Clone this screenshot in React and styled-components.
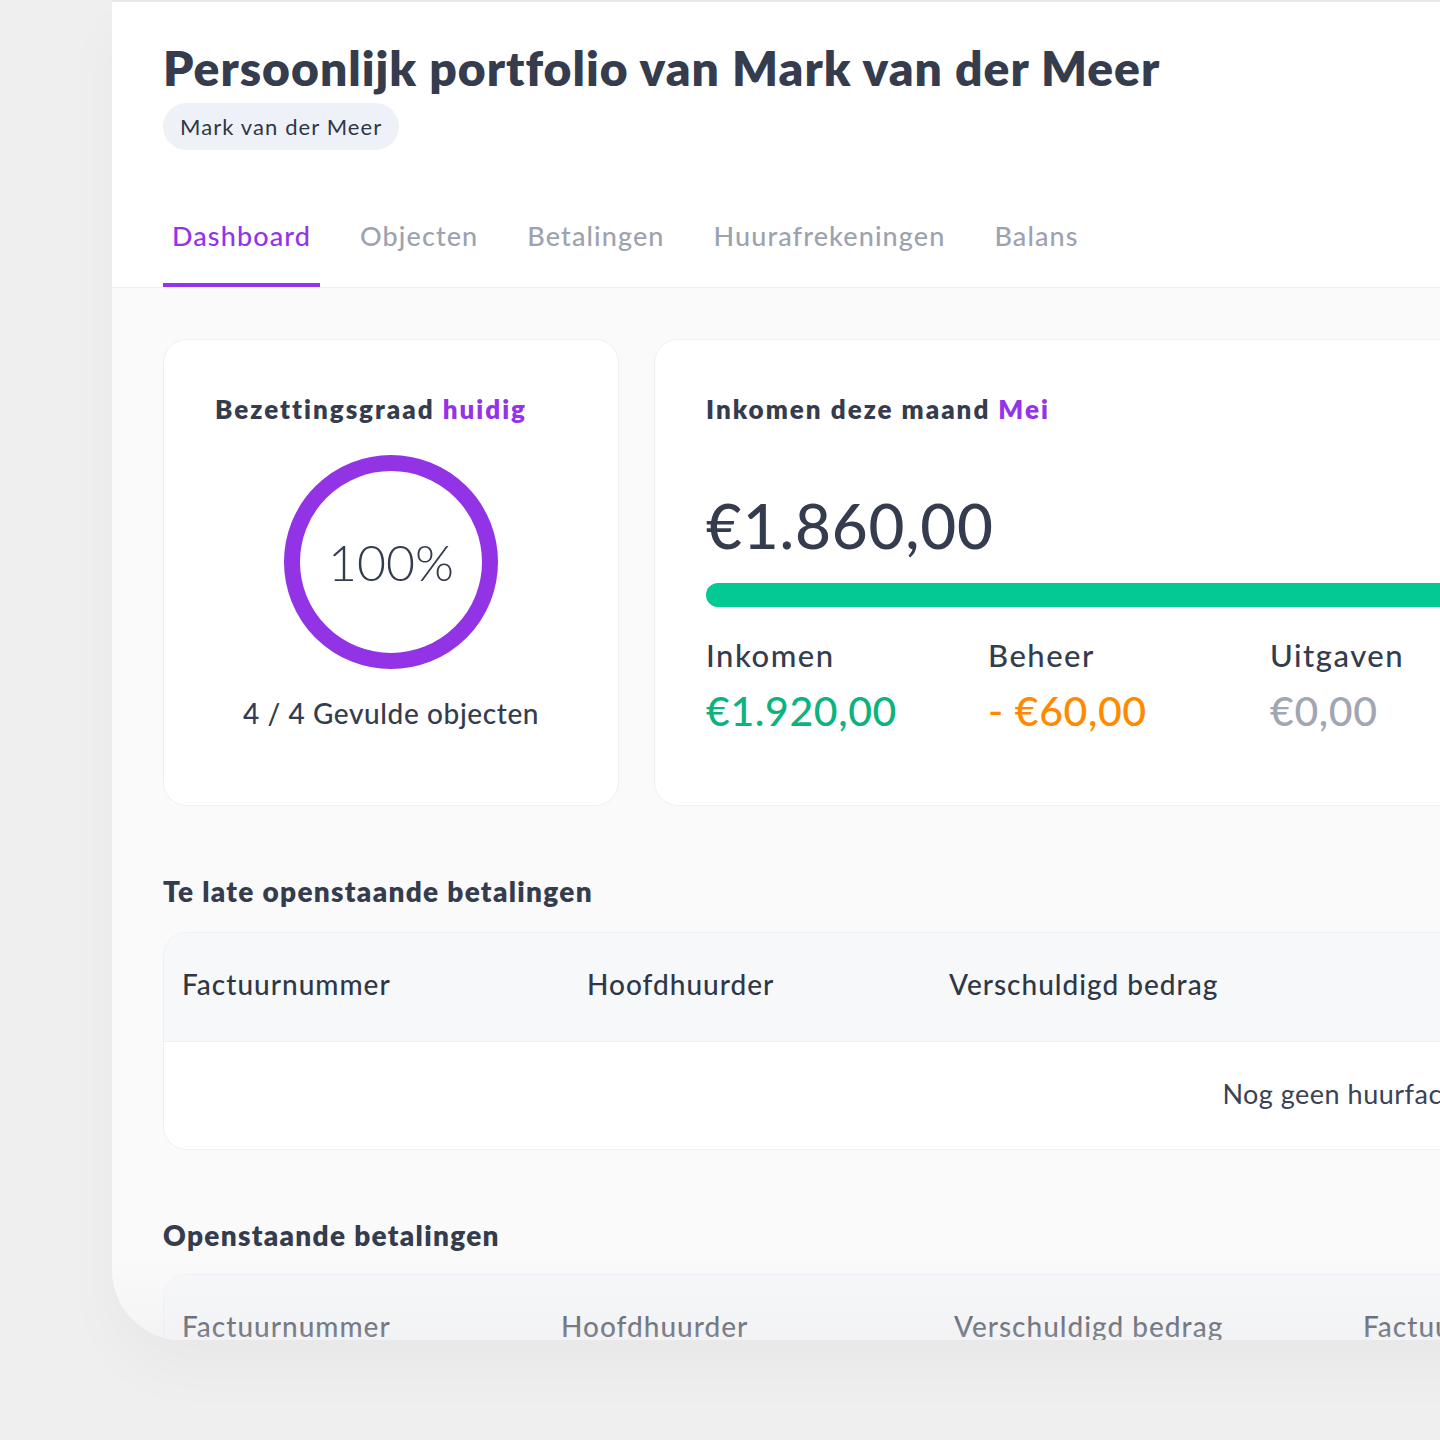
import React from 'react';
import styled, { createGlobalStyle } from 'styled-components';

const GlobalStyle = createGlobalStyle`
  html, body {
    margin: 0;
    padding: 0;
    background: #efefef;
    overflow: hidden;
  }
  * { box-sizing: border-box; }
`;

const Page = styled.div`
  height: 1440px;
  padding-left: 112px;
  font-family: 'Lato', 'Open Sans', sans-serif;
  color: #353d4f;
`;

const Panel = styled.div`
  position: relative;
  width: 2506px;
  height: 1340px;
  background: #fafafb;
  border-top: 2px solid #e6e8ec;
  border-radius: 0 0 0 70px;
  overflow: hidden;
  box-shadow: 0 30px 60px rgba(0, 0, 0, 0.03);
`;

const Fade = styled.div`
  position: absolute;
  left: 0;
  right: 0;
  bottom: 0;
  height: 80px;
  background: linear-gradient(to bottom, rgba(236, 236, 238, 0) 0%, rgba(236, 236, 238, 0.45) 100%);
  pointer-events: none;
`;

const Header = styled.header`
  background: #fff;
  padding: 36px 51px 0;
  border-bottom: 1px solid #eceef2;
`;

const Title = styled.h1`
  margin: 0;
  font-size: 48px;
  line-height: 60px;
  font-weight: 800;
  letter-spacing: 1px;
  color: #343c4e;
`;

const Chip = styled.span`
  display: inline-flex;
  align-items: center;
  height: 47px;
  margin-top: 5px;
  padding: 0 17px;
  border-radius: 24px;
  background: #eef1f7;
  font-size: 22px;
  letter-spacing: 1.1px;
  color: #2f3747;
`;

const Tabs = styled.nav`
  display: flex;
  gap: 31px;
  margin-top: 47px;
`;

const Tab = styled.div`
  padding: 22px 9px 30px;
  font-size: 27px;
  line-height: 34px;
  font-weight: 500;
  letter-spacing: 1.1px;
  color: ${p => (p.$active ? '#9333ea' : '#9ca3af')};
  border-bottom: 4px solid ${p => (p.$active ? '#9333ea' : 'transparent')};
`;

const Content = styled.main`
  padding: 51px 51px 0;
`;

const CardsRow = styled.div`
  display: grid;
  grid-template-columns: 456px 1107px;
  gap: 35px;
`;

const Card = styled.section`
  height: 467px;
  background: #fff;
  border: 1px solid #edf0f5;
  border-radius: 24px;
  padding: 52px 51px;
  display: flex;
  flex-direction: column;
  align-items: ${p => (p.$center ? 'center' : 'stretch')};
`;

const CardTitle = styled.h2`
  align-self: flex-start;
  margin: 0;
  font-size: 26px;
  line-height: 34px;
  font-weight: 800;
  letter-spacing: 2px;
  color: #343c4e;
`;

const Accent = styled.span`
  color: #9333ea;
`;

const Ring = styled.div`
  position: relative;
  width: 214px;
  height: 214px;
  margin-top: 29px;
  display: flex;
  align-items: center;
  justify-content: center;
`;

const RingSvg = styled.svg`
  position: absolute;
  inset: 0;
`;

const RingLabel = styled.span`
  font-size: 50px;
  font-weight: 300;
  color: #343c4e;
`;

const Filled = styled.p`
  margin: 27px 0 0;
  font-size: 28px;
  line-height: 34px;
  font-weight: 500;
  letter-spacing: 0.6px;
  color: #343c4e;
`;

const Total = styled.div`
  margin-top: 65px;
  font-size: 62px;
  line-height: 68px;
  font-weight: 500;
  letter-spacing: 0.8px;
  color: #343c4e;
`;

const Bar = styled.div`
  margin-top: 24px;
  height: 24px;
  border-radius: 12px;
  background: #03c995;
`;

const Stats = styled.div`
  display: grid;
  grid-template-columns: repeat(3, 282px);
  margin-top: 28px;
`;

const StatLabel = styled.div`
  font-size: 31px;
  line-height: 40px;
  font-weight: 500;
  letter-spacing: 1.5px;
  color: #343c4e;
`;

const StatValue = styled.div`
  margin-top: 14px;
  font-size: 41px;
  line-height: 44px;
  font-weight: 500;
  letter-spacing: 0.6px;
  color: ${p => p.$color};
`;

const SectionTitle = styled.h3`
  margin: ${p => p.$top}px 0 ${p => p.$bottom}px;
  font-size: 28px;
  line-height: 36px;
  font-weight: 800;
  letter-spacing: 1.3px;
  color: #343c4e;
`;

const TableCard = styled.div`
  background: #fff;
  border: 1px solid #edf0f5;
  border-radius: 24px;
  overflow: hidden;
`;

const Table = styled.table`
  width: 100%;
  border-collapse: collapse;
  table-layout: fixed;
`;

const Th = styled.th`
  height: 108px;
  padding: 0 18px 5px;
  background: #f7f8fa;
  text-align: left;
  font-size: 28px;
  font-weight: 500;
  letter-spacing: 1px;
  color: #2f3747;
  border-bottom: 1px solid #eef0f4;
  white-space: nowrap;
`;

const EmptyCell = styled.td`
  height: 108px;
  padding-bottom: 4px;
  text-align: center;
  font-size: 27px;
  font-weight: 400;
  letter-spacing: 0.5px;
  color: #3a4254;
`;

const Donut = () => (
  <RingSvg width="214" height="214" viewBox="0 0 214 214">
    <circle cx="107" cy="107" r="99" fill="none" stroke="#9333e6" strokeWidth="16" />
  </RingSvg>
);

const tabs = ['Dashboard', 'Objecten', 'Betalingen', 'Huurafrekeningen', 'Balans'];

const lateCols = [405, 362, 540, 420, 420];
const openCols = [379, 393, 409, 420, 420];

const PaymentsTable = ({ widths, headers, empty }) => (
  <TableCard>
    <Table>
      <colgroup>
        {widths.map((w, i) => (
          <col key={i} style={{ width: w }} />
        ))}
        <col />
      </colgroup>
      <thead>
        <tr>
          {headers.map(h => (
            <Th key={h}>{h}</Th>
          ))}
        </tr>
      </thead>
      {empty && (
        <tbody>
          <tr>
            <EmptyCell colSpan={headers.length}>{empty}</EmptyCell>
          </tr>
        </tbody>
      )}
    </Table>
  </TableCard>
);

export default function App() {
  return (
    <Page>
      <GlobalStyle />
      <Panel>
        <Header>
          <Title>Persoonlijk portfolio van Mark van der Meer</Title>
          <Chip>Mark van der Meer</Chip>
          <Tabs>
            {tabs.map((t, i) => (
              <Tab key={t} $active={i === 0}>{t}</Tab>
            ))}
          </Tabs>
        </Header>
        <Content>
          <CardsRow>
            <Card $center>
              <CardTitle>
                Bezettingsgraad <Accent>huidig</Accent>
              </CardTitle>
              <Ring>
                <Donut />
                <RingLabel>100%</RingLabel>
              </Ring>
              <Filled>4 / 4 Gevulde objecten</Filled>
            </Card>
            <Card>
              <CardTitle>
                Inkomen deze maand <Accent>Mei</Accent>
              </CardTitle>
              <Total>€1.860,00</Total>
              <Bar />
              <Stats>
                <div>
                  <StatLabel>Inkomen</StatLabel>
                  <StatValue $color="#0db37e">€1.920,00</StatValue>
                </div>
                <div>
                  <StatLabel>Beheer</StatLabel>
                  <StatValue $color="#ff8a00">- €60,00</StatValue>
                </div>
                <div>
                  <StatLabel>Uitgaven</StatLabel>
                  <StatValue $color="#a1a6b3">€0,00</StatValue>
                </div>
              </Stats>
            </Card>
          </CardsRow>

          <SectionTitle $top={67} $bottom={23}>Te late openstaande betalingen</SectionTitle>
          <PaymentsTable
            widths={lateCols}
            headers={['Factuurnummer', 'Hoofdhuurder', 'Verschuldigd bedrag', 'Factuurdatum', 'Vervaldatum', 'Status']}
            empty="Nog geen huurfacturen"
          />

          <SectionTitle $top={67} $bottom={21}>Openstaande betalingen</SectionTitle>
          <PaymentsTable
            widths={openCols}
            headers={['Factuurnummer', 'Hoofdhuurder', 'Verschuldigd bedrag', 'Factuurdatum', 'Vervaldatum', 'Status']}
          />
        </Content>
        <Fade />
      </Panel>
    </Page>
  );
}
